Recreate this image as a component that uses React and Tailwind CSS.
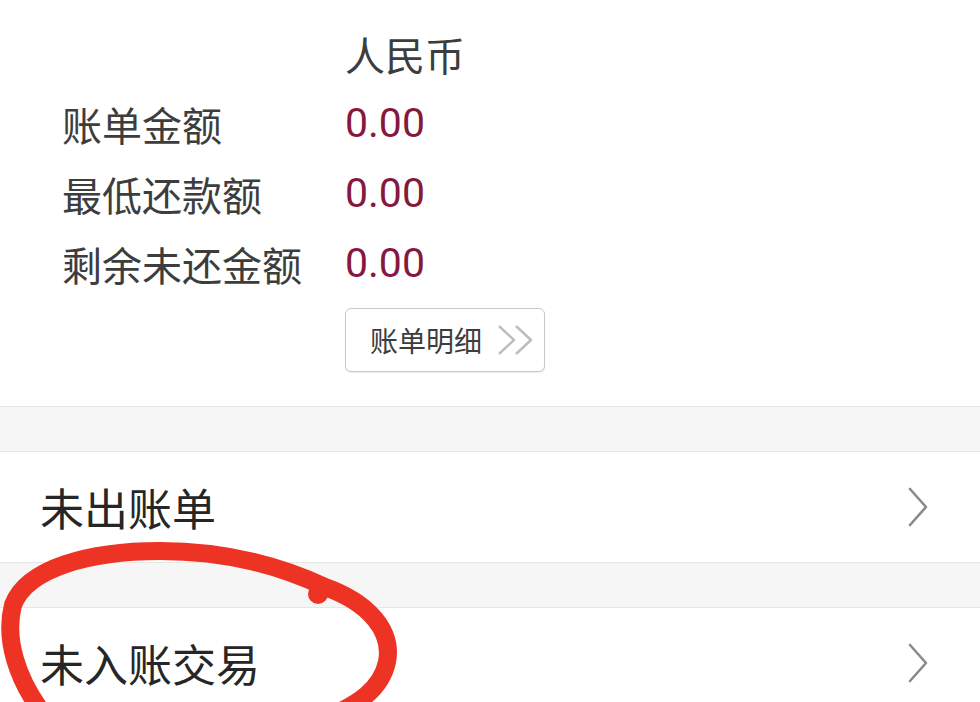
import React from "react";

const cjk = "font-['Noto_Sans_CJK_SC','Noto_Sans',sans-serif]";

const Chevron = () => (
  <svg width="24" height="40" viewBox="0 0 24 40" className="shrink-0">
    <path d="M4 2 L20 20 L4 38" fill="none" stroke="#8a8a8a" strokeWidth="2.6" strokeLinecap="round" strokeLinejoin="round" />
  </svg>
);

const DoubleChevron = () => (
  <svg width="40" height="32" viewBox="0 0 40 32">
    <path d="M3 2 L18 16 L3 30" fill="none" stroke="#bdbdbd" strokeWidth="2.4" strokeLinejoin="round" />
    <path d="M20 2 L35 16 L20 30" fill="none" stroke="#bdbdbd" strokeWidth="2.4" strokeLinejoin="round" />
  </svg>
);

const rows = [
  { label: "账单金额", value: "0.00" },
  { label: "最低还款额", value: "0.00" },
  { label: "剩余未还金额", value: "0.00" },
];

const ListRow = ({ title }) => (
  <div className="flex items-center justify-between h-[110px] bg-white pl-[40px] pr-[50px]">
    <span className={`${cjk} text-[44px] text-[#262626] leading-none`}>{title}</span>
    <Chevron />
  </div>
);

const Gap = () => (
  <div className="h-[46px] bg-[#f6f6f6] border-y border-[#e6e6e6]" />
);

export default function App() {
  return (
    <div className="relative w-[980px] h-[702px] overflow-hidden bg-white">
      {/* bill summary */}
      <div className="pl-[62px] pt-[19px] pb-[34px]">
        <div className="grid grid-cols-[283px_1fr]">
          <div className="h-[70px]" />
          <div className={`${cjk} h-[70px] flex items-center text-[40px] text-[#3d3d3d]`}>人民币</div>
          {rows.map((r) => (
            <React.Fragment key={r.label}>
              <div className={`${cjk} h-[70px] flex items-center text-[40px] text-[#3d3d3d]`}>{r.label}</div>
              <div className="h-[70px] flex items-center font-['Roboto',sans-serif] text-[41px] text-[#86183d]">{r.value}</div>
            </React.Fragment>
          ))}
          <div />
          <div className="pt-[9px]">
            <button className="flex items-center w-[200px] h-[64px] rounded-[6px] border-[1.5px] border-[#c9c9c9] bg-white pl-[24px] pr-[8px] shadow-[0_1px_1px_rgba(0,0,0,0.08)]">
              <span className={`${cjk} text-[28px] text-[#3d3d3d] leading-none`}>账单明细</span>
              <span className="ml-[14px]"><DoubleChevron /></span>
            </button>
          </div>
        </div>
      </div>

      <Gap />
      <ListRow title="未出账单" />
      <Gap />
      <ListRow title="未入账交易" />

      {/* hand drawn annotation */}
      <svg className="absolute inset-0 pointer-events-none" width="980" height="702" viewBox="0 0 980 702">
        <path
          d="M42 712 C18 680 4 640 13 605 C27 568 90 551 160 551 C230 551 282 567 325 587 C370 603 393 632 387 662 C381 690 356 705 330 716"
          fill="none"
          stroke="#ec3324"
          strokeWidth="18"
          strokeLinecap="round"
          strokeLinejoin="round"
        />
        <circle cx="318" cy="594" r="10" fill="#ec3324" />
      </svg>
    </div>
  );
}
